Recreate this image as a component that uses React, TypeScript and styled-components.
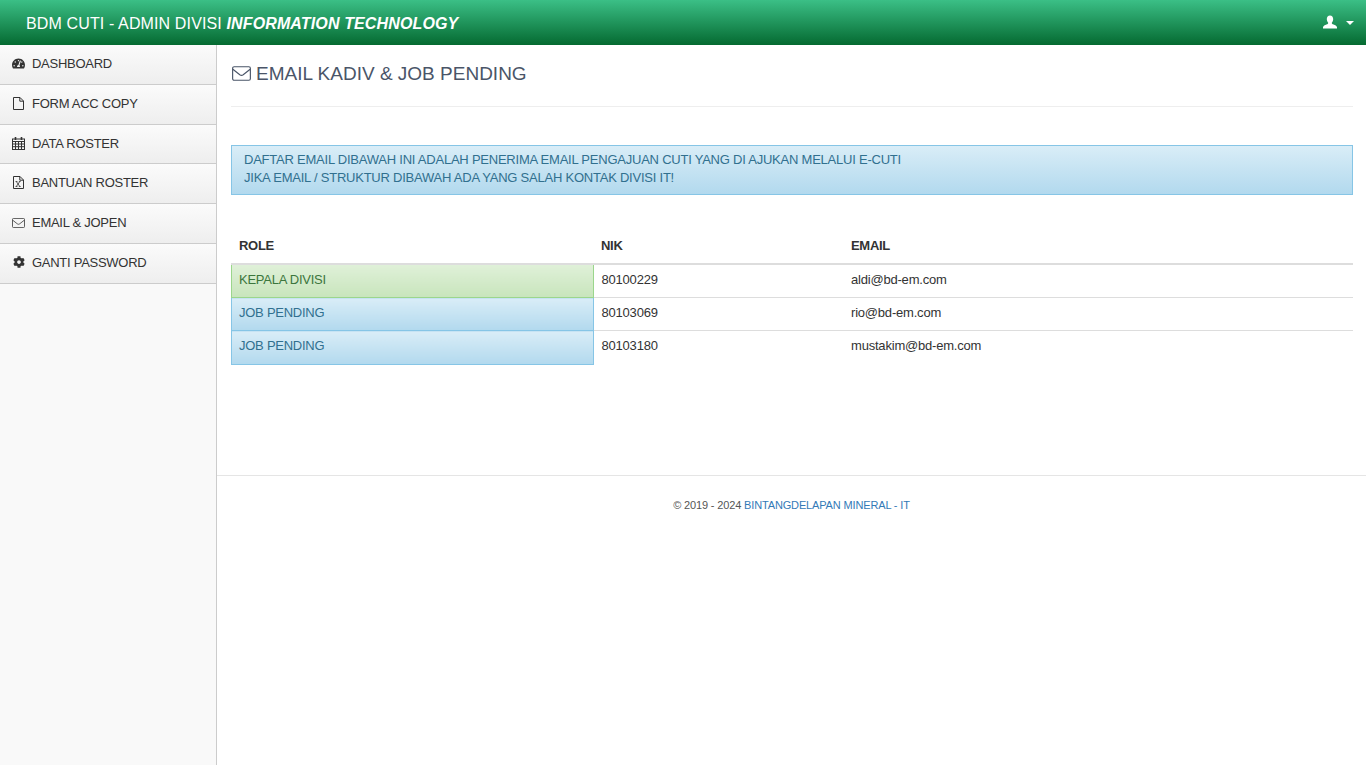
import React from 'react';
import styled, { createGlobalStyle } from 'styled-components';
import { FaCog, FaTachometerAlt } from 'react-icons/fa';

const GlobalStyle = createGlobalStyle`
  html, body {
    margin: 0;
    padding: 0;
    background: #fff;
    font-family: "Liberation Sans", Arial, sans-serif;
    font-size: 13px;
    color: #333;
  }
  * { box-sizing: border-box; }
`;

const Page = styled.div`
  display: flex;
  flex-direction: column;
  min-height: 765px;
`;

const Navbar = styled.header`
  display: flex;
  align-items: center;
  justify-content: space-between;
  height: 45px;
  padding: 0 12px 0 26px;
  background: linear-gradient(to bottom, #3bbf86 0%, #056a31 100%);
  color: #fff;
`;

const Brand = styled.div`
  font-size: 16px;
  line-height: 20px;
  margin-top: 2px;
  letter-spacing: 0.13px;
  em { font-weight: bold; font-style: italic; }
`;

const UserMenu = styled.div`
  display: flex;
  align-items: center;
  gap: 9px;
  margin-top: -1px;
`;

const Caret = styled.span`
  width: 0;
  height: 0;
  margin-top: 1px;
  border-top: 4px solid #fff;
  border-left: 4px solid transparent;
  border-right: 4px solid transparent;
`;

const Body = styled.div`
  display: flex;
  flex: 1;
`;

const Sidebar = styled.nav`
  flex: 0 0 217px;
  background: #f9f9f9;
  border-right: 1px solid #ccc;
`;

const MenuItem = styled.a`
  display: flex;
  align-items: center;
  height: 39.8px;
  padding: 0 0 1.8px 12px;
  border-bottom: 1px solid #ccc;
  background: linear-gradient(to bottom, #fbfbfb 0%, #eeeeee 100%);
  color: #333;
  font-size: 13px;
  letter-spacing: -0.27px;
`;

const MenuIcon = styled.span`
  display: inline-flex;
  justify-content: center;
  width: 13px;
  margin-right: 7px;
  color: #333;
`;

const Main = styled.main`
  flex: 1;
  min-width: 0;
`;

const Content = styled.div`
  height: 430px;
  padding: 0 13px 0 14px;
`;

const Title = styled.h3`
  display: flex;
  align-items: center;
  gap: 5px;
  height: 62px;
  margin: 0;
  padding: 0 0 4px 1px;
  border-bottom: 1px solid #eee;
  font-size: 19px;
  font-weight: normal;
  color: #4a5568;
`;

const Alert = styled.div`
  margin-top: 38px;
  height: 50px;
  padding: 5px 12px;
  border: 1px solid #86c5e6;
  background: linear-gradient(to bottom, #d9edf7 0%, #b2d9ee 100%);
  color: #31708f;
  line-height: 18px;
  letter-spacing: -0.23px;
`;

const Table = styled.table`
  width: 100%;
  margin-top: 33px;
  border-collapse: collapse;
  table-layout: fixed;
`;

const HeadCell = styled.th`
  height: 36px;
  padding: 7px 7.5px;
  border-bottom: 2px solid #ddd;
  color: #333;
  font-weight: bold;
  text-align: left;
  letter-spacing: -0.3px;
`;

const Cell = styled.td`
  height: 33px;
  padding: 5px 7.5px 7px;
  border-top: 1px solid #ddd;
  line-height: 20px;
  vertical-align: top;
  font-size: 13px;
  letter-spacing: -0.2px;
  tr:last-child & { height: 34px; }
`;

const RoleCell = styled(Cell)<{ $tone: 'success' | 'info' }>`
  padding-left: 7px;
  border: 1px solid ${p => (p.$tone === 'success' ? '#9bd68c' : '#86c5e6')};
  color: ${p => (p.$tone === 'success' ? '#3c763d' : '#31708f')};
  background: ${p =>
    p.$tone === 'success'
      ? 'linear-gradient(to bottom, #dff0d8 0%, #c8e5bc 100%)'
      : 'linear-gradient(to bottom, #d9edf7 0%, #b2d9ee 100%)'};
  letter-spacing: -0.25px;
`;

const Footer = styled.footer`
  padding-top: 21px;
  border-top: 1px solid #e5e5e5;
  text-align: center;
  font-size: 11px;
  line-height: 16px;
  letter-spacing: -0.15px;
  color: #555;
  a { color: #337ab7; }
`;

function EnvelopeIcon({ size = 13 }: { size?: number }) {
  const h = Math.round(size * 0.77);
  return (
    <svg width={size} height={h} viewBox="0 0 18 14" fill="none" stroke="currentColor" strokeWidth="1.1">
      <rect x="0.6" y="0.6" width="16.8" height="12.8" rx="1.4" />
      <path d="M0.8 3 L7.4 8.2 Q9 9.4 10.6 8.2 L17.2 3" />
    </svg>
  );
}

function FileIcon() {
  return (
    <svg width="11" height="13" viewBox="0 0 11 13" fill="none" stroke="currentColor" strokeWidth="1">
      <path d="M0.5 0.5 H7 L10.5 4 V12.5 H0.5 Z" />
      <path d="M6.8 0.5 V4.2 H10.5" />
    </svg>
  );
}

function CalendarIcon() {
  return (
    <svg width="13" height="13" viewBox="0 0 13 13" fill="none" stroke="currentColor" strokeWidth="1">
      <rect x="0.5" y="2" width="12" height="10.5" />
      <path d="M0.5 4.5 H12.5 M0.5 7 H12.5 M0.5 9.7 H12.5 M3.5 4.5 V12.5 M6.5 4.5 V12.5 M9.5 4.5 V12.5" />
      <path d="M3.5 0 V3 M9.5 0 V3" strokeWidth="1.6" />
    </svg>
  );
}

function ExcelIcon() {
  return (
    <svg width="11" height="13" viewBox="0 0 11 13" fill="none" stroke="currentColor" strokeWidth="1">
      <path d="M0.5 0.5 H7 L10.5 4 V12.5 H0.5 Z" />
      <path d="M6.8 0.5 V4.2 H10.5" />
      <path d="M3.3 5.5 L6.8 10.5 M6.8 5.5 L3.3 10.5 M2.6 5.5 H4.4 M5.9 5.5 H7.6 M2.6 10.5 H4.4 M5.9 10.5 H7.6" strokeWidth="0.8" />
    </svg>
  );
}

function UserIcon() {
  return (
    <svg width="14" height="14" viewBox="0 0 14 14" fill="#fff">
      <path d="M7 0.5 C9 0.5 10.2 2 10.2 4.1 C10.2 5.6 9.6 7 8.8 7.8 C8.6 8.6 9.2 9 10.6 9.6 C12.2 10.2 13.6 10.8 14 12.2 L14 13.5 L0 13.5 L0 12.2 C0.4 10.8 1.8 10.2 3.4 9.6 C4.8 9 5.4 8.6 5.2 7.8 C4.4 7 3.8 5.6 3.8 4.1 C3.8 2 5 0.5 7 0.5 Z" />
    </svg>
  );
}

const menu = [
  { label: 'DASHBOARD', icon: <FaTachometerAlt size={13} /> },
  { label: 'FORM ACC COPY', icon: <FileIcon /> },
  { label: 'DATA ROSTER', icon: <CalendarIcon /> },
  { label: 'BANTUAN ROSTER', icon: <ExcelIcon /> },
  { label: 'EMAIL & JOPEN', icon: <EnvelopeIcon /> },
  { label: 'GANTI PASSWORD', icon: <FaCog size={12} /> },
];

const rows: { role: string; tone: 'success' | 'info'; nik: string; email: string }[] = [
  { role: 'KEPALA DIVISI', tone: 'success', nik: '80100229', email: 'aldi@bd-em.com' },
  { role: 'JOB PENDING', tone: 'info', nik: '80103069', email: 'rio@bd-em.com' },
  { role: 'JOB PENDING', tone: 'info', nik: '80103180', email: 'mustakim@bd-em.com' },
];

export default function App() {
  return (
    <Page>
      <GlobalStyle />
      <Navbar>
        <Brand>
          BDM CUTI - ADMIN DIVISI <em>INFORMATION TECHNOLOGY</em>
        </Brand>
        <UserMenu>
          <UserIcon />
          <Caret />
        </UserMenu>
      </Navbar>
      <Body>
        <Sidebar>
          {menu.map(item => (
            <MenuItem key={item.label}>
              <MenuIcon>{item.icon}</MenuIcon>
              {item.label}
            </MenuItem>
          ))}
        </Sidebar>
        <Main>
          <Content>
            <Title>
              <EnvelopeIcon size={19} />
              EMAIL KADIV &amp; JOB PENDING
            </Title>
            <Alert>
              DAFTAR EMAIL DIBAWAH INI ADALAH PENERIMA EMAIL PENGAJUAN CUTI YANG DI AJUKAN MELALUI E-CUTI
              <br />
              JIKA EMAIL / STRUKTUR DIBAWAH ADA YANG SALAH KONTAK DIVISI IT!
            </Alert>
            <Table>
              <colgroup>
                <col style={{ width: 362 }} />
                <col style={{ width: 250 }} />
                <col />
              </colgroup>
              <thead>
                <tr>
                  <HeadCell>ROLE</HeadCell>
                  <HeadCell>NIK</HeadCell>
                  <HeadCell>EMAIL</HeadCell>
                </tr>
              </thead>
              <tbody>
                {rows.map(row => (
                  <tr key={row.nik}>
                    <RoleCell $tone={row.tone}>{row.role}</RoleCell>
                    <Cell>{row.nik}</Cell>
                    <Cell>{row.email}</Cell>
                  </tr>
                ))}
              </tbody>
            </Table>
          </Content>
          <Footer>
            © 2019 - 2024 <a>BINTANGDELAPAN MINERAL - IT</a>
          </Footer>
        </Main>
      </Body>
    </Page>
  );
}
